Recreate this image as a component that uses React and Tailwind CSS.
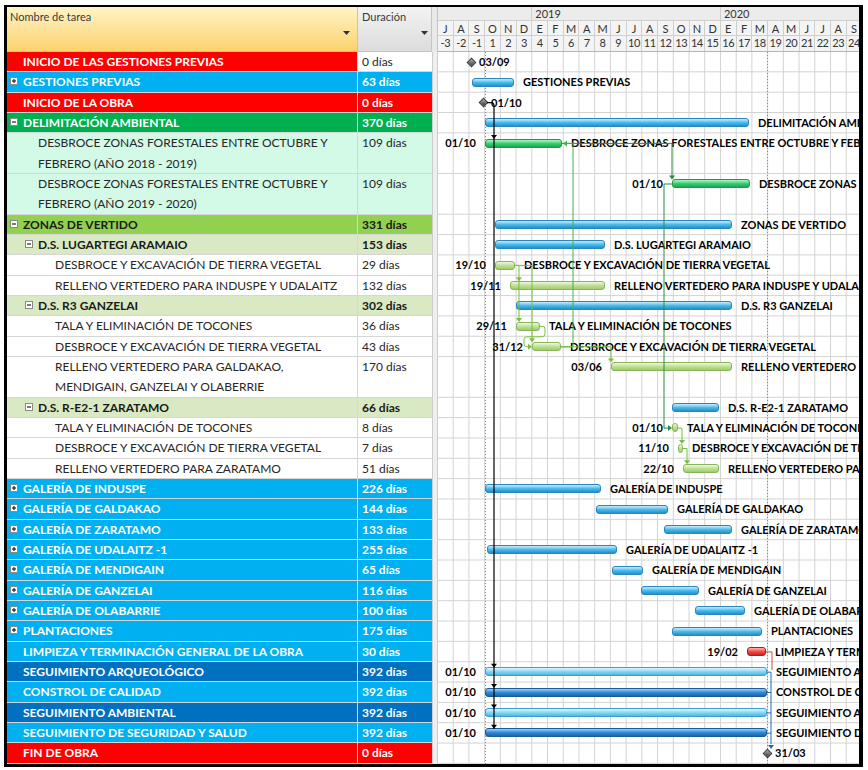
import React from 'react'

const U = 20.34
const W = 15.72

const cellStyle = {
    red: 'bg-[#ff0000] text-white font-bold',
    blue: 'bg-[#00b0f0] text-white font-bold',
    navy: 'bg-[#0070c0] text-white font-bold',
    green: 'bg-[#00b050] text-white font-bold',
    mint: 'bg-[#d3f9e7] text-[#262626]',
    lime: 'bg-[#92d050] text-[#1a1a1a] font-bold',
    pale: 'bg-[#d8e9c3] text-[#1a1a1a] font-bold',
    white: 'bg-white text-[#262626]',
}

const barStyle = {
    blue: 'border-[#2a86bf] from-[#c4ecfc] via-[#4dbbe9] to-[#1f90cf]',
    green: 'border-[#1f9a48] from-[#a6f5c4] via-[#34d26e] to-[#1aa651]',
    lime: 'border-[#88b55a] from-[#eef8dc] via-[#c0e096] to-[#9fcb6c]',
    red: 'border-[#b01c1c] from-[#ffb0b0] via-[#f24a4a] to-[#cf1f1f]',
    sky: 'border-[#3a9fd3] from-[#e2f6fe] via-[#8ad6f5] to-[#4cb6e6]',
    deep: 'border-[#1a5c98] from-[#9ccdf2] via-[#3189d3] to-[#1c64aa]',
}

const spacer = ['w-[3px]', 'w-[18px]', 'w-[35px]']

// x positions are px from the left edge of the chart (July 2018)
const rows = [
    { name: ['INICIO DE LAS GESTIONES PREVIAS'], dur: '0 días', lvl: 0, kind: 'red', durKind: 'white', ms: { x: 33, label: '03/09' } },
    { name: ['GESTIONES PREVIAS'], dur: '63 días', lvl: 0, icon: '+', kind: 'blue', bar: { x0: 34, x1: 76, t: 'blue', label: 'GESTIONES PREVIAS' } },
    { name: ['INICIO DE LA OBRA'], dur: '0 días', lvl: 0, kind: 'red', ms: { x: 45, label: '01/10' } },
    { name: ['DELIMITACIÓN AMBIENTAL'], dur: '370 días', lvl: 0, icon: '-', kind: 'green', bar: { x0: 47, x1: 311, t: 'blue', label: 'DELIMITACIÓN AMBIENTAL' } },
    { name: ['DESBROCE ZONAS FORESTALES ENTRE OCTUBRE Y', 'FEBRERO (AÑO 2018 - 2019)'], dur: '109 días', lvl: 1, kind: 'mint', bar: { x0: 47, x1: 124, t: 'green', left: '01/10', label: 'DESBROCE ZONAS FORESTALES ENTRE OCTUBRE Y FEBRERO (AÑO 2018 - 2019)' } },
    { name: ['DESBROCE ZONAS FORESTALES ENTRE OCTUBRE Y', 'FEBRERO (AÑO 2019 - 2020)'], dur: '109 días', lvl: 1, kind: 'mint', bar: { x0: 234, x1: 312, t: 'green', left: '01/10', label: 'DESBROCE ZONAS FORESTALES ENTRE OCTUBRE Y FEBRERO (AÑO 2019 - 2020)' } },
    { name: ['ZONAS DE VERTIDO'], dur: '331 días', lvl: 0, icon: '-', kind: 'lime', bar: { x0: 57, x1: 294, t: 'blue', label: 'ZONAS DE VERTIDO' } },
    { name: ['D.S. LUGARTEGI ARAMAIO'], dur: '153 días', lvl: 1, icon: '-', kind: 'pale', bar: { x0: 57, x1: 167, t: 'blue', label: 'D.S. LUGARTEGI ARAMAIO' } },
    { name: ['DESBROCE Y EXCAVACIÓN DE TIERRA VEGETAL'], dur: '29 días', lvl: 2, kind: 'white', bar: { x0: 57, x1: 77, t: 'lime', left: '19/10', label: 'DESBROCE Y EXCAVACIÓN DE TIERRA VEGETAL' } },
    { name: ['RELLENO VERTEDERO PARA INDUSPE Y UDALAITZ'], dur: '132 días', lvl: 2, kind: 'white', bar: { x0: 72, x1: 167, t: 'lime', left: '19/11', label: 'RELLENO VERTEDERO PARA INDUSPE Y UDALAITZ' } },
    { name: ['D.S. R3 GANZELAI'], dur: '302 días', lvl: 1, icon: '-', kind: 'pale', bar: { x0: 78, x1: 294, t: 'blue', label: 'D.S. R3 GANZELAI' } },
    { name: ['TALA Y ELIMINACIÓN DE TOCONES'], dur: '36 días', lvl: 2, kind: 'white', bar: { x0: 78, x1: 102, t: 'lime', left: '29/11', label: 'TALA Y ELIMINACIÓN DE TOCONES' } },
    { name: ['DESBROCE Y EXCAVACIÓN DE TIERRA VEGETAL'], dur: '43 días', lvl: 2, kind: 'white', bar: { x0: 94, x1: 123, t: 'lime', left: '31/12', label: 'DESBROCE Y EXCAVACIÓN DE TIERRA VEGETAL' } },
    { name: ['RELLENO VERTEDERO PARA GALDAKAO,', 'MENDIGAIN, GANZELAI Y OLABERRIE'], dur: '170 días', lvl: 2, kind: 'white', bar: { x0: 173, x1: 294, t: 'lime', left: '03/06', label: 'RELLENO VERTEDERO PARA GALDAKAO, MENDIGAIN, GANZELAI Y OLABERRIE' } },
    { name: ['D.S. R-E2-1 ZARATAMO'], dur: '66 días', lvl: 1, icon: '-', kind: 'pale', bar: { x0: 234, x1: 281, t: 'blue', label: 'D.S. R-E2-1 ZARATAMO' } },
    { name: ['TALA Y ELIMINACIÓN DE TOCONES'], dur: '8 días', lvl: 2, kind: 'white', bar: { x0: 234, x1: 240, t: 'lime', left: '01/10', label: 'TALA Y ELIMINACIÓN DE TOCONES' } },
    { name: ['DESBROCE Y EXCAVACIÓN DE TIERRA VEGETAL'], dur: '7 días', lvl: 2, kind: 'white', bar: { x0: 240, x1: 245, t: 'lime', left: '11/10', label: 'DESBROCE Y EXCAVACIÓN DE TIERRA VEGETAL' } },
    { name: ['RELLENO VERTEDERO PARA ZARATAMO'], dur: '51 días', lvl: 2, kind: 'white', bar: { x0: 245, x1: 281, t: 'lime', left: '22/10', label: 'RELLENO VERTEDERO PARA ZARATAMO' } },
    { name: ['GALERÍA DE INDUSPE'], dur: '226 días', lvl: 0, icon: '+', kind: 'blue', bar: { x0: 47, x1: 163, t: 'blue', label: 'GALERÍA DE INDUSPE' } },
    { name: ['GALERÍA DE GALDAKAO'], dur: '144 días', lvl: 0, icon: '+', kind: 'blue', bar: { x0: 158, x1: 230, t: 'blue', label: 'GALERÍA DE GALDAKAO' } },
    { name: ['GALERÍA DE ZARATAMO'], dur: '133 días', lvl: 0, icon: '+', kind: 'blue', bar: { x0: 226, x1: 294, t: 'blue', label: 'GALERÍA DE ZARATAMO' } },
    { name: ['GALERÍA DE UDALAITZ -1'], dur: '255 días', lvl: 0, icon: '+', kind: 'blue', bar: { x0: 49, x1: 179, t: 'blue', label: 'GALERÍA DE UDALAITZ -1' } },
    { name: ['GALERÍA DE MENDIGAIN'], dur: '65 días', lvl: 0, icon: '+', kind: 'blue', bar: { x0: 174, x1: 205, t: 'blue', label: 'GALERÍA DE MENDIGAIN' } },
    { name: ['GALERÍA DE GANZELAI'], dur: '116 días', lvl: 0, icon: '+', kind: 'blue', bar: { x0: 203, x1: 261, t: 'blue', label: 'GALERÍA DE GANZELAI' } },
    { name: ['GALERÍA DE OLABARRIE'], dur: '100 días', lvl: 0, icon: '+', kind: 'blue', bar: { x0: 257, x1: 307, t: 'blue', label: 'GALERÍA DE OLABARRIE' } },
    { name: ['PLANTACIONES'], dur: '175 días', lvl: 0, icon: '+', kind: 'blue', bar: { x0: 234, x1: 324, t: 'blue', label: 'PLANTACIONES' } },
    { name: ['LIMPIEZA Y TERMINACIÓN GENERAL DE LA OBRA'], dur: '30 días', lvl: 0, kind: 'blue', bar: { x0: 309, x1: 328, t: 'red', left: '19/02', label: 'LIMPIEZA Y TERMINACIÓN GENERAL DE LA OBRA' } },
    { name: ['SEGUIMIENTO ARQUEOLÓGICO'], dur: '392 días', lvl: 0, kind: 'navy', bar: { x0: 47, x1: 329, t: 'sky', left: '01/10', label: 'SEGUIMIENTO ARQUEOLÓGICO' } },
    { name: ['CONSTROL DE CALIDAD'], dur: '392 días', lvl: 0, kind: 'blue', bar: { x0: 47, x1: 329, t: 'deep', left: '01/10', label: 'CONSTROL DE CALIDAD' } },
    { name: ['SEGUIMIENTO AMBIENTAL'], dur: '392 días', lvl: 0, kind: 'navy', bar: { x0: 47, x1: 329, t: 'sky', left: '01/10', label: 'SEGUIMIENTO AMBIENTAL' } },
    { name: ['SEGUIMIENTO DE SEGURIDAD Y SALUD'], dur: '392 días', lvl: 0, kind: 'blue', bar: { x0: 47, x1: 329, t: 'deep', left: '01/10', label: 'SEGUIMIENTO DE SEGURIDAD Y SALUD' } },
    { name: ['FIN DE OBRA'], dur: '0 días', lvl: 0, kind: 'red', ms: { x: 329, label: '31/03' } },
]

const months = 'JASONDEFMAMJJASONDEFMAMJJAS'.split('')
const nums = [-3, -2, -1, ...Array.from({ length: 24 }, (_, i) => i + 1)]

const rowH = (r) => (r.name.length === 2 ? 'h-[40.68px]' : 'h-[20.34px]')

// row bottoms for the chart grid
const bottoms = []
rows.reduce((acc, r) => {
    const b = acc + r.name.length * U
    bottoms.push(b)
    return b
}, 0)

const Caret = () => (
    <svg width="7" height="4" viewBox="0 0 7 4">
        <path d="M0 0 H7 L3.5 4 Z" fill="#333" />
    </svg>
)

const Toggle = ({ open }) => (
    <div className="w-[8px] h-[8px] border border-[#8a8a8a] bg-white flex items-center justify-center">
        <svg width="6" height="6" viewBox="0 0 6 6">
            <path d="M1 3 H5" stroke="#222" strokeWidth="1.2" />
            {!open && <path d="M3 1 V5" stroke="#222" strokeWidth="1.2" />}
        </svg>
    </div>
)

const down = (x, y) => `${x - 3},${y - 4} ${x + 3},${y - 4} ${x},${y}`
const right = (x, y) => `${x - 4},${y - 3} ${x - 4},${y + 3} ${x},${y}`
const left = (x, y) => `${x + 4},${y - 3} ${x + 4},${y + 3} ${x},${y}`

const Grid = () => (
    <svg className="absolute inset-0" width="421" height="712">
        {months.map((_, k) => (
            <line key={k} x1={(k + 1) * W - 0.5} y1="0" x2={(k + 1) * W - 0.5} y2="712" stroke="#d3d3d3" />
        ))}
        {bottoms.map((b, k) => (
            <line key={k} x1="0" y1={b - 0.5} x2="421" y2={b - 0.5} stroke="#d3d3d3" />
        ))}
        <line x1="47.5" y1="0" x2="47.5" y2="712" stroke="#8a8a8a" strokeDasharray="1 2" />
        <line x1="329.5" y1="0" x2="329.5" y2="712" stroke="#8a8a8a" strokeDasharray="1 2" />
    </svg>
)

const Links = () => (
    <svg className="absolute inset-0 pointer-events-none" width="421" height="712" fill="none">
        {/* inicio de la obra */}
        <path d="M49 50.7 H53 Q56 50.7 56 54 V677" stroke="#000" strokeWidth="1.2" />
        {[87, 615.7, 636, 656.4, 676.7].map((y) => (
            <polygon key={y} points={down(56, y)} fill="#000" />
        ))}
        {/* desbroces forestales */}
        <path d="M124 91.4 H234 V124" stroke="#2b8c3c" />
        <polygon points={down(234, 127.5)} fill="#2b8c3c" />
        <path d="M234 132 H226 V376.1 H230" stroke="#2b8c3c" />
        <polygon points={right(234, 376.1)} fill="#2b8c3c" />
        <path d="M123 294.8 H135 V91.4 H129" stroke="#45b045" />
        <polygon points={left(125, 91.4)} fill="#45b045" />
        {/* zonas de vertido */}
        <path d="M77 213.4 H81 V266" stroke="#78bf3c" />
        <polygon points={down(81, 229.2)} fill="#78bf3c" />
        <polygon points={down(81, 269.9)} fill="#78bf3c" />
        <path d="M77 213.4 H94 V287" stroke="#78bf3c" />
        <polygon points={down(94, 290.3)} fill="#78bf3c" />
        <path d="M102 274.4 H105 Q107 274.4 107 277 V282 Q107 284.8 104 284.8 H89 Q86 284.8 86 287.5 V292 Q86 294.8 89 294.8 H90" stroke="#78bf3c" />
        <polygon points={right(94, 294.8)} fill="#78bf3c" />
        <path d="M123 294.8 H173 V307" stroke="#78bf3c" />
        <polygon points={down(173, 310.6)} fill="#78bf3c" />
        <path d="M240 376.1 H244 V389" stroke="#78bf3c" />
        <polygon points={down(244, 392)} fill="#78bf3c" />
        <path d="M245 396.5 H249 V409" stroke="#78bf3c" />
        <polygon points={down(249, 412.3)} fill="#78bf3c" />
        {/* fin de obra */}
        <path d="M328 599.9 H334 V618" stroke="#c0504d" />
        <path d="M329 620.2 H333 M329 640.5 H333 M329 660.9 H333 M329 681.2 H333 M333 620.2 V692" stroke="#1f6db5" />
        <polygon points={down(333, 697)} fill="#1f6db5" />
    </svg>
)

const ChartRow = ({ r }) => (
    <div className={`relative ${rowH(r)}`}>
        {r.bar && (
            <>
                {r.bar.left && (
                    <span
                        className="absolute top-0 -translate-x-full leading-[20.34px] text-[11px] font-bold text-black whitespace-nowrap"
                        style={{ left: r.bar.x0 - 9 }}
                    >
                        {r.bar.left}
                    </span>
                )}
                <div
                    className={`absolute top-[5.5px] h-[9px] rounded-[3px] border bg-linear-to-b ${barStyle[r.bar.t]}`}
                    style={{ left: r.bar.x0, width: r.bar.x1 - r.bar.x0 }}
                />
                <span
                    className="absolute top-0 leading-[20.34px] text-[11px] font-bold text-black whitespace-nowrap"
                    style={{ left: r.bar.x1 + 9 }}
                >
                    {r.bar.label}
                </span>
            </>
        )}
        {r.ms && (
            <>
                <div
                    className="absolute top-[6.5px] w-[7px] h-[7px] rotate-45 border border-[#333] bg-linear-to-br from-[#b0b0b0] to-[#3c3c3c]"
                    style={{ left: r.ms.x - 3.5 }}
                />
                <span
                    className="absolute top-0 leading-[20.34px] text-[11px] font-bold text-black whitespace-nowrap"
                    style={{ left: r.ms.x + 8 }}
                >
                    {r.ms.label}
                </span>
            </>
        )}
    </div>
)

export default function App() {
    return (
        <div className="w-[868px] h-[770px] bg-white pt-[5px] pl-[4px] font-['Lato','Liberation_Sans',sans-serif]">
            <div className="w-[859px] border-black border-l-[3px] border-r-[4px] border-t-2 border-b-[3px]">
                {/* cabecera */}
                <div className="flex h-[45px]">
                    <div className="w-[351px] flex flex-col justify-between bg-linear-to-b from-[#fff3c6] to-[#fbd36a] border-r border-b border-[#c4c4c4] pl-[3px] pr-[7px] pt-[3px] pb-[16px]">
                        <span className="text-[11px] leading-[14px] text-[#3a3a3a]">Nombre de tarea</span>
                        <div className="flex justify-end"><Caret /></div>
                    </div>
                    <div className="w-[74px] flex flex-col justify-between bg-linear-to-b from-[#f3f3f3] to-[#dcdcdc] border-r border-b border-[#c4c4c4] pl-[4px] pr-[3px] pt-[3px] pb-[16px]">
                        <span className="text-[11px] leading-[14px] text-[#3a3a3a]">Duración</span>
                        <div className="flex justify-end"><Caret /></div>
                    </div>
                    <div className="w-[6px] bg-[#e9e9e9] border-r border-[#c4c4c4]" />
                    <div className="w-[421px] overflow-hidden flex flex-col bg-[#f4f4f4] border-b border-[#b5b5b5] text-[11px] text-[#333]">
                        <div className="flex h-[14px] bg-[#ececec] border-b border-[#cfcfcf] leading-[14px]">
                            <div className="flex-none w-[94.32px] border-r border-[#cfcfcf]" />
                            <div className="flex-none w-[188.64px] border-r border-[#cfcfcf] pl-[3px]">2019</div>
                            <div className="flex-none w-[141.48px] pl-[3px]">2020</div>
                        </div>
                        <div className="flex h-[15px] border-b border-[#cfcfcf] leading-[15px]">
                            {months.map((m, k) => (
                                <div key={k} className="flex-none w-[15.72px] border-r border-[#cfcfcf] text-center">{m}</div>
                            ))}
                        </div>
                        <div className="flex h-[15px] leading-[14px]">
                            {nums.map((n) => (
                                <div key={n} className="flex-none w-[15.72px] border-r border-[#cfcfcf] text-center tracking-[-0.4px]">{n}</div>
                            ))}
                        </div>
                    </div>
                </div>

                {/* cuerpo */}
                <div className="flex">
                    <div className="flex flex-col w-[425px] text-[12px]">
                        {rows.map((r, i) => (
                            <div key={i} className={`flex ${rowH(r)} border-b border-[#d6d6d6]`}>
                                <div className={`w-[351px] flex items-start border-r border-[#d6d6d6] ${cellStyle[r.kind]}`}>
                                    <div className={`flex-none ${spacer[r.lvl]}`} />
                                    <div className="flex-none w-[13px] pt-[5px]">
                                        {r.icon && <Toggle open={r.icon === '-'} />}
                                    </div>
                                    <div className="leading-[20.34px] whitespace-nowrap">
                                        {r.name.map((l, k) => (
                                            <div key={k}>{l}</div>
                                        ))}
                                    </div>
                                </div>
                                <div className={`w-[74px] pl-[4px] leading-[20.34px] ${cellStyle[r.durKind || r.kind]}`}>{r.dur}</div>
                            </div>
                        ))}
                    </div>
                    <div className="w-[6px] bg-[#efefef] border-l border-r border-[#cdcdcd]" />
                    <div className="relative w-[421px] h-[712px] overflow-hidden bg-white">
                        <Grid />
                        <div className="relative flex flex-col">
                            {rows.map((r, i) => (
                                <ChartRow key={i} r={r} />
                            ))}
                        </div>
                        <Links />
                    </div>
                </div>
            </div>
        </div>
    )
}
